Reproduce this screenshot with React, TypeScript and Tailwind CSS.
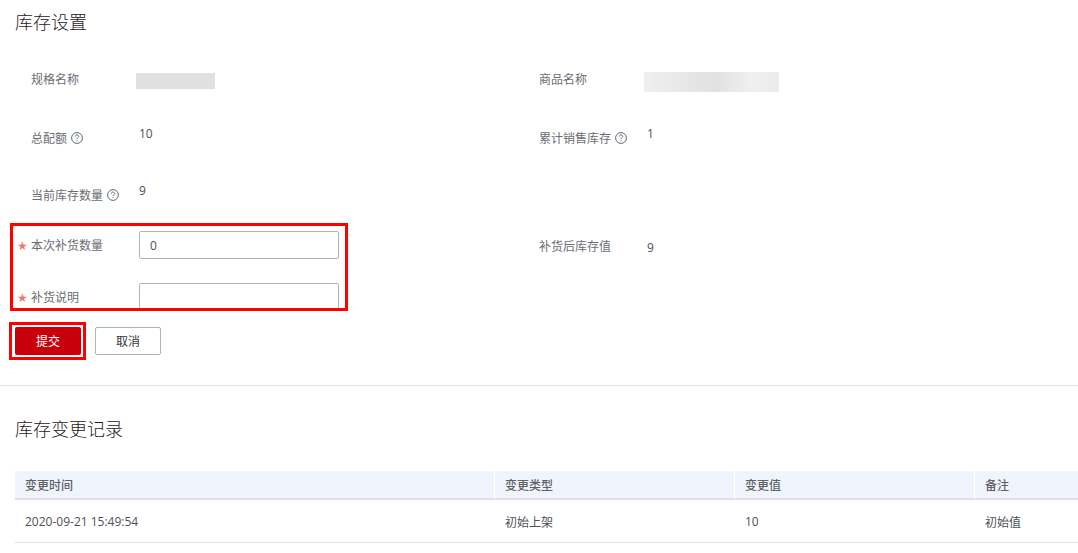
import React from "react";

const font = { fontFamily: '"Noto Sans CJK SC", "Open Sans", sans-serif' };

function Help() {
  return (
    <svg width="12" height="12" viewBox="0 0 12 12" className="ml-[4px] shrink-0" fill="none">
      <circle cx="6" cy="6" r="5.4" stroke="#666873" strokeWidth="1" />
      <path d="M4.3 4.7C4.3 3.6 5.1 3 6 3C6.9 3 7.7 3.6 7.7 4.5C7.7 5.6 6 5.6 6 7.1" stroke="#666873" strokeWidth="1" />
      <rect x="5.5" y="8.1" width="1" height="1" fill="#666873" />
    </svg>
  );
}

function Label({ text, help, top }: { text: string; help?: boolean; top: string }) {
  return (
    <div className={`flex items-center h-[18px] text-[12px] text-[#6b6d75] whitespace-nowrap ${top}`}>
      {text}
      {help && <Help />}
    </div>
  );
}

function Value({ children, top = "mt-[1px]" }: { children: React.ReactNode; top?: string }) {
  return <div className={`h-[18px] leading-[18px] text-[12px] text-[#4d4f58] ${top}`} style={{ fontFamily: '"Open Sans", sans-serif' }}>{children}</div>;
}

function Star() {
  return <span className="w-[13px] h-[18px] -ml-[1px] mr-[1px] text-[12px] leading-[20px] text-[#f4786e]" style={{ fontFamily: '"DejaVu Sans", sans-serif' }}>★</span>;
}

export default function App() {
  return (
    <div className="w-[1078px] h-[553px] overflow-hidden bg-white" style={font}>
      <h1 className="ml-[15px] pt-[8px] h-[36px] text-[18px] leading-[26px] font-light text-[#1f2026]">库存设置</h1>

      <div className="mt-[34px] ml-[31px] h-[54px] flex">
        <div className="w-[105px]"><Label text="规格名称" top="" /></div>
        <div className="w-[403px]">
          <div className="mt-[3px] w-[79px] h-[16px] bg-[#e0e0e2] blur-[0.5px]" />
        </div>
        <div className="w-[105px]"><Label text="商品名称" top="" /></div>
        <div className="mt-[2px] w-[135px] h-[20px] bg-[linear-gradient(90deg,#f0f0f1,#e4e4e6_40%,#e2e2e4_55%,#f0f0f1_80%,#ebebec)]" />
      </div>

      <div className="ml-[31px] h-[58px] flex">
        <div className="w-[108px]"><Label text="总配额" help top="mt-[5px]" /></div>
        <div className="w-[400px]"><Value>10</Value></div>
        <div className="w-[108px]"><Label text="累计销售库存" help top="mt-[5px]" /></div>
        <Value>1</Value>
      </div>

      <div className="ml-[31px] h-[41px] flex">
        <div className="w-[108px]"><Label text="当前库存数量" help top="mt-[4px]" /></div>
        <Value top="">9</Value>
      </div>

      <div className="ml-[10px] flex">
        <div className="w-[338px] h-[88px] border-[3px] border-[#ff0000] overflow-hidden pt-[5px] pl-[5px]">
          <div className="flex h-[52px]">
            <div className="w-[121px] mt-[5px] flex"><Star /><Label text="本次补货数量" top="" /></div>
            <div className="w-[200px] h-[28px] border border-[#b0b3be] rounded-[2px] pl-[10px] text-[12px] leading-[27px] text-[#4d4f58]" style={{ fontFamily: '"Open Sans", sans-serif' }}>0</div>
          </div>
          <div className="flex">
            <div className="w-[121px] mt-[5px] flex"><Star /><Label text="补货说明" top="" /></div>
            <div className="w-[200px] h-[28px] border border-[#b0b3be] rounded-[2px]" />
          </div>
        </div>
        <div className="ml-[191px] mt-[14px] w-[108px]"><Label text="补货后库存值" top="" /></div>
        <div className="mt-[15px]"><Value>9</Value></div>
      </div>

      <div className="mt-[11px] ml-[9px] flex items-center">
        <div className="w-[77px] h-[38px] border-[3px] border-[#ff0000] py-[2px] pl-[3px]">
          <button className="block w-[66px] h-[28px] bg-[#c7000b] rounded-[2px] text-[12px] text-white">提交</button>
        </div>
        <button className="ml-[9px] w-[66px] h-[28px] border border-[#b0b3be] rounded-[2px] text-[12px] text-[#33343a]">取消</button>
      </div>

      <div className="mt-[25px] border-t border-[#dfe1e6]" />

      <h2 className="ml-[15px] mt-[29px] h-[27px] text-[18px] leading-[26px] font-light text-[#1f2026]">库存变更记录</h2>

      <div className="mt-[29px] ml-[15px] text-[12px]">
        <div className="grid grid-cols-[480px_240px_240px_1fr] h-[29px] bg-[#f0f4fc] border-b-2 border-[#dfe1e6] text-[#5e6068] font-medium">
          <div className="pl-[10px] leading-[28px] border-r border-white">变更时间</div>
          <div className="pl-[10px] leading-[28px] border-r border-white">变更类型</div>
          <div className="pl-[10px] leading-[28px] border-r border-white">变更值</div>
          <div className="pl-[10px] leading-[28px]">备注</div>
        </div>
        <div className="grid grid-cols-[480px_240px_240px_1fr] h-[43px] border-b border-[#dfe1e6] text-[#4d4f58] leading-[43px]">
          <div className="pl-[10px]" style={{ fontFamily: '"Open Sans", sans-serif' }}>2020-09-21 15:49:54</div>
          <div className="pl-[10px]">初始上架</div>
          <div className="pl-[10px]" style={{ fontFamily: '"Open Sans", sans-serif' }}>10</div>
          <div className="pl-[10px]">初始值</div>
        </div>
      </div>
    </div>
  );
}
